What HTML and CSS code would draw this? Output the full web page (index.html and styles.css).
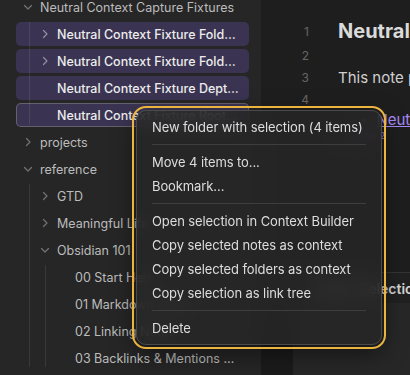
FILE: index.html
```html
<!DOCTYPE html>
<html lang="en">
<head>
    <meta charset="UTF-8">
    <title>Neutral Context Capture Fixtures</title>
    <link rel="stylesheet" href="styles.css">
</head>
<body>
    <div class="app">
        <!-- File tree -->
        <aside class="sidebar">
            <div class="tree">
                <div class="row d0">
                    <svg class="chev" viewBox="0 0 12 12"><path d="M2.5 4.5 L6 8 L9.5 4.5"/></svg>
                    <span class="label">Neutral Context Capture Fixtures</span>
                </div>
                <div class="group g0">
                    <div class="row d1 sel">
                        <svg class="chev" viewBox="0 0 12 12"><path d="M4.5 2.5 L8 6 L4.5 9.5"/></svg>
                        <span class="label">Neutral Context Fixture Folder Alpha</span>
                    </div>
                    <div class="row d1 sel">
                        <svg class="chev" viewBox="0 0 12 12"><path d="M4.5 2.5 L8 6 L4.5 9.5"/></svg>
                        <span class="label">Neutral Context Fixture Folder Beta</span>
                    </div>
                    <div class="row d1 sel">
                        <span class="label">Neutral Context Fixture Depth Note</span>
                    </div>
                    <div class="row d1 sel focus">
                        <span class="label">Neutral Context Fixture Root Note</span>
                    </div>
                </div>
                <div class="row d0">
                    <svg class="chev" viewBox="0 0 12 12"><path d="M4.5 2.5 L8 6 L4.5 9.5"/></svg>
                    <span class="label">projects</span>
                </div>
                <div class="row d0">
                    <svg class="chev" viewBox="0 0 12 12"><path d="M2.5 4.5 L6 8 L9.5 4.5"/></svg>
                    <span class="label">reference</span>
                </div>
                <div class="group g0">
                    <div class="row d1">
                        <svg class="chev" viewBox="0 0 12 12"><path d="M4.5 2.5 L8 6 L4.5 9.5"/></svg>
                        <span class="label">GTD</span>
                    </div>
                    <div class="row d1">
                        <svg class="chev" viewBox="0 0 12 12"><path d="M4.5 2.5 L8 6 L4.5 9.5"/></svg>
                        <span class="label">Meaningful Life</span>
                    </div>
                    <div class="row d1">
                        <svg class="chev" viewBox="0 0 12 12"><path d="M2.5 4.5 L6 8 L9.5 4.5"/></svg>
                        <span class="label">Obsidian 101</span>
                    </div>
                    <div class="group g1">
                        <div class="row d2"><span class="label">00 Start Here</span></div>
                        <div class="row d2"><span class="label">01 Markdown Basics</span></div>
                        <div class="row d2"><span class="label">02 Linking Notes</span></div>
                        <div class="row d2"><span class="label">03 Backlinks &amp; Mentions Explained</span></div>
                    </div>
                </div>
            </div>
        </aside>

        <!-- Editor -->
        <main class="editor">
            <div class="doc">
                <div class="line l-h1"><span class="ln">1</span><span class="text h1">Neutral Context Capture Fixtures</span></div>
                <div class="line l-gap"><span class="ln">2</span></div>
                <div class="line l-p"><span class="ln">3</span><span class="text">This note points at the fixture folders below.</span></div>
                <div class="line l-gap2"><span class="ln">4</span></div>
                <div class="line l-link"><span class="ln"></span><span class="text nested"><span class="bullet">•</span><a class="link">Neutral Context Fixture Folder 1</a></span></div>
                <div class="line l-small"><span class="ln"></span><span class="text small"><a class="link">Fixture Folder 2</a></span></div>
            </div>
            <div class="panel">
                <div class="panel-head">Smart Selection</div>
                <div class="panel-body">
                    <div class="panel-gutter"></div>
                    <div class="panel-main"></div>
                </div>
            </div>
        </main>
    </div>

    <!-- Context menu -->
    <div class="menu">
        <div class="item">New folder with selection (4 items)</div>
        <div class="sep"></div>
        <div class="item">Move 4 items to...</div>
        <div class="item">Bookmark...</div>
        <div class="sep"></div>
        <div class="item">Open selection in Context Builder</div>
        <div class="item">Copy selected notes as context</div>
        <div class="item">Copy selected folders as context</div>
        <div class="item">Copy selection as link tree</div>
        <div class="sep"></div>
        <div class="item">Delete</div>
    </div>
</body>
</html>
```
FILE: styles.css
```css
body {
    margin: 0;
    background-color: #1e1e1e;
    font-family: Inter, "Noto Sans", sans-serif;
    overflow: hidden;
}
.app {
    display: flex;
    height: 375px;
}
.sidebar {
    width: 261px;
    flex: none;
    background-color: #262626;
    overflow: hidden;
}
.tree {
    margin-top: -5px;
    padding: 0 12px 0 16px;
}
.row {
    display: flex;
    align-items: center;
    height: 24px;
    margin-bottom: 3px;
    padding-right: 10px;
    border-radius: 5px;
    box-sizing: border-box;
    color: #bcbcbc;
    font-size: 12.5px;
    white-space: nowrap;
}
.row.sel {
    background-color: #3a3452;
    color: #ececec;
    font-weight: 500;
}
.row.focus {
    box-shadow: inset 0 0 0 1px #64616e;
}
.d0 { padding-left: 24px; }
.d1 { padding-left: 41px; }
.d2 { padding-left: 59px; }
.chev {
    width: 12px;
    height: 12px;
    flex: none;
    margin-left: -18px;
    margin-right: 6px;
    fill: none;
    stroke: #737373;
    stroke-width: 1.2;
    stroke-linecap: round;
    stroke-linejoin: round;
}
.sel .chev {
    stroke: #938ea5;
}
.label {
    overflow: hidden;
    text-overflow: ellipsis;
}
.group {
    position: relative;
}
.group::before {
    content: "";
    position: absolute;
    top: 0;
    bottom: 3px;
    left: 13px;
    width: 1px;
    background-color: rgba(255, 255, 255, 0.09);
}
.group.g1::before {
    left: 29px;
}

/* editor */
.editor {
    flex: 1;
    display: flex;
    flex-direction: column;
    min-width: 0;
}
.doc {
    padding-top: 15px;
}
.line {
    display: flex;
    align-items: center;
    white-space: nowrap;
    overflow: hidden;
}
.ln {
    width: 48px;
    flex: none;
    text-align: right;
    color: #666;
    font-size: 12px;
    margin-right: 29px;
}
.l-h1 { height: 32px; }
.l-gap { height: 16px; }
.l-p { height: 28px; }
.l-gap2 { height: 17px; }
.l-link { height: 22px; }
.l-small { height: 10px; }
.text {
    color: #d0d0d0;
    font-size: 15px;
}
.h1 {
    font-size: 20px;
    font-weight: 700;
    color: #dadada;
}
.nested {
    padding-left: 22px;
}
.bullet {
    color: #888;
    margin-right: 8px;
}
.link {
    color: #a68af9;
    text-decoration: underline;
}
.small {
    font-size: 9px;
    width: 47px;
    overflow: hidden;
    text-align: right;
    direction: rtl;
}
.panel {
    margin-top: auto;
    height: 103px;
    border-top: 1px solid #353535;
    box-sizing: border-box;
    display: flex;
    flex-direction: column;
}
.panel-head {
    height: 30px;
    flex: none;
    display: flex;
    align-items: center;
    padding-left: 54px;
    background-color: #212121;
    color: #d4d4d4;
    font-size: 14px;
    font-weight: 600;
    white-space: nowrap;
}
.panel-body {
    flex: 1;
    display: flex;
}
.panel-gutter {
    width: 32px;
    background-color: #1b1b1b;
}
.panel-main {
    flex: 1;
    background-color: #272727;
}

/* context menu */
.menu {
    position: absolute;
    left: 136px;
    top: 110px;
    width: 246px;
    box-sizing: border-box;
    padding: 4px 0;
    background-color: rgba(38, 38, 38, 0.84);
    backdrop-filter: blur(10px);
    border: 1px solid #4a4a4a;
    border-radius: 10px;
    outline: 2px solid #eab43e;
    outline-offset: 2px;
    box-shadow: 0 8px 24px rgba(0, 0, 0, 0.5);
}
.item {
    height: 24px;
    display: flex;
    align-items: center;
    padding: 0 15px;
    color: #dddddd;
    font-size: 13px;
    letter-spacing: -0.1px;
    white-space: nowrap;
}
.sep {
    height: 1px;
    margin: 5px 15px;
    background-color: #3e3e3e;
}
```
